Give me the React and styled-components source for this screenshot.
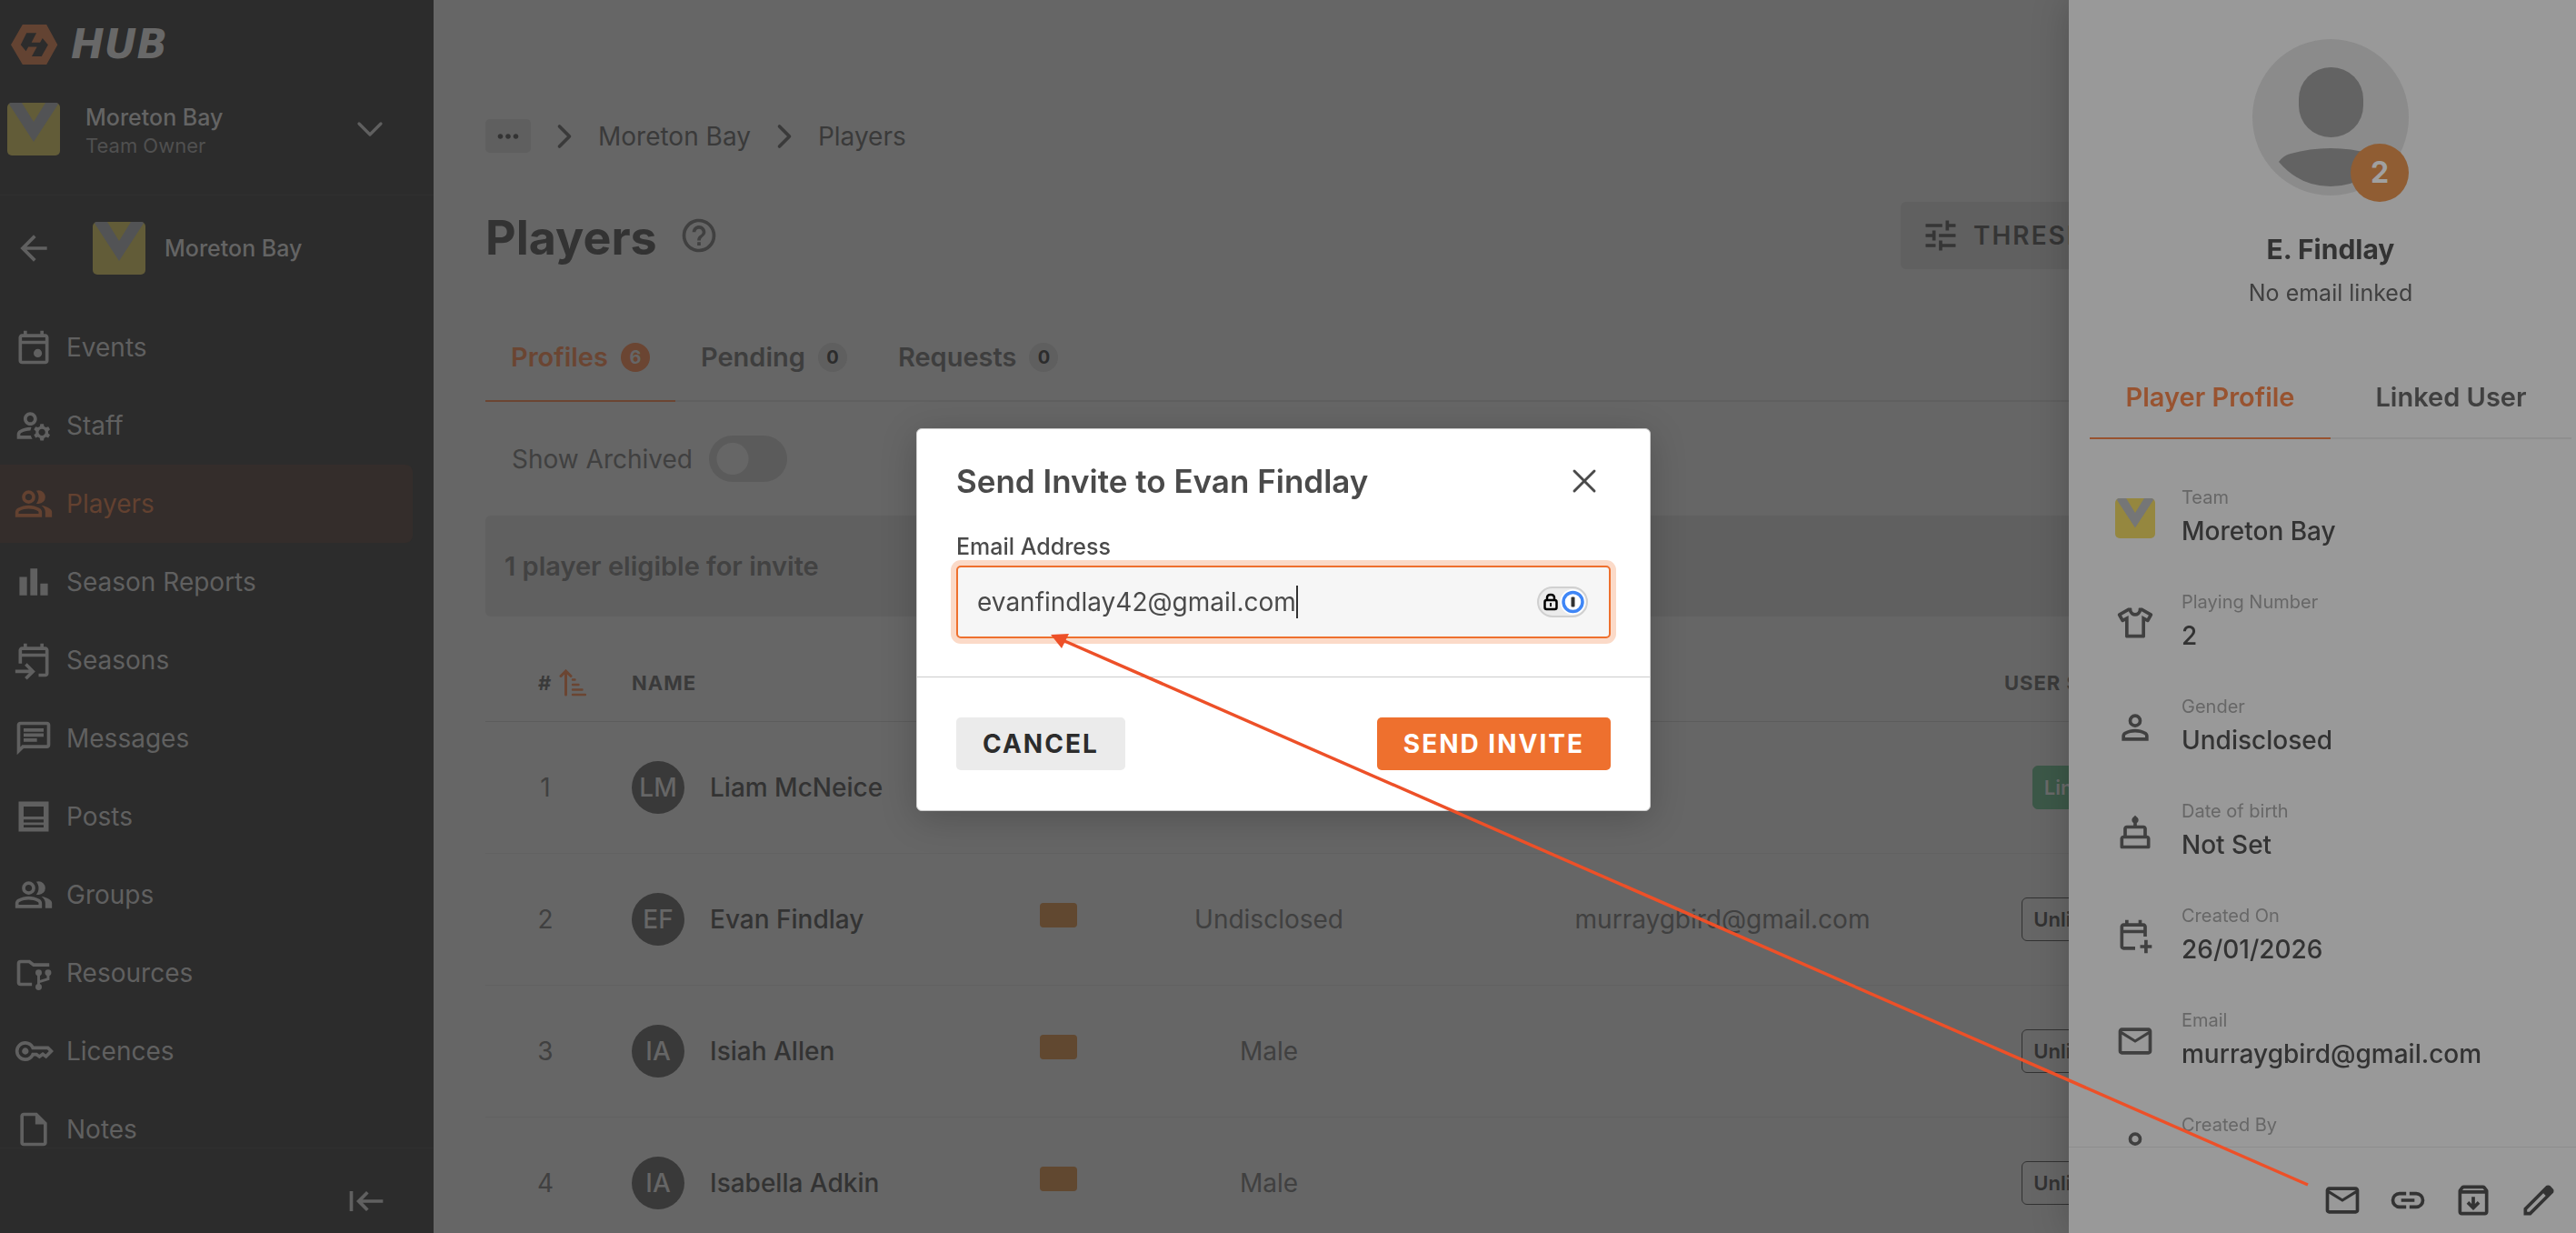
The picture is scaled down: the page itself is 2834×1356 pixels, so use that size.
import { useState } from 'react';
import styled, { createGlobalStyle } from 'styled-components';
import { MdHelpOutline, MdOutlineManageAccounts, MdMoreHoriz } from 'react-icons/md';
import { ChevronDown, ChevronRight, X } from 'lucide-react';

// Paths are drawn on the 960 unit grid with a negative y axis
const paths = {
  event:
    'M580-240q-42 0-71-29t-29-71q0-42 29-71t71-29q42 0 71 29t29 71q0 42-29 71t-71 29ZM200-80q-33 0-56.5-23.5T120-160v-560q0-33 23.5-56.5T200-800h40v-80h80v80h320v-80h80v80h40q33 0 56.5 23.5T840-720v560q0 33-23.5 56.5T760-80H200Zm0-80h560v-400H200v400Zm0-480h560v-80H200v80Z',
  group:
    'M40-160v-112q0-34 17.5-62.5T104-378q62-31 126-46.5T360-440q66 0 130 15.5T616-378q29 15 46.5 43.5T680-272v112H40Zm720 0v-120q0-44-24.5-84.5T666-434q51 6 96 20.5t84 35.5q36 20 55 44.5t19 53.5v120H760ZM360-480q-66 0-113-47t-47-113q0-66 47-113t113-47q66 0 113 47t47 113q0 66-47 113t-113 47Zm400-160q0 66-47 113t-113 47q-11 0-28-2.5t-28-5.5q27-32 41.5-71t14.5-81q0-42-14.5-81T544-792q14-5 28-6.5t28-1.5q66 0 113 47t47 113ZM120-240h480v-32q0-11-5.500-20T580-306q-54-27-109-40.500T360-360q-56 0-111 13.500T140-306q-9 5-14.500 14t-5.500 20v32Zm240-320q33 0 56.500-23.500T440-640q0-33-23.500-56.500T360-720q-33 0-56.500 23.500T280-640q0 33 23.500 56.500T360-560Z',
  chart: 'M640-160v-280h180v280H640Zm-240 0v-640h170v640H400Zm-260 0v-440h180v440H140Z',
  upcoming:
    'M600-80v-80h160v-400H200v160h-80v-320q0-33 23.5-56.5T200-800h40v-80h80v80h320v-80h80v80h40q33 0 56.5 23.5T840-720v560q0 33-23.5 56.5T760-80H600ZM320-10l-56-56 103-104H40v-80h327L264-354l56-56 200 200L320-10ZM200-640h560v-80H200v80Z',
  chat:
    'M240-400h320v-80H240v80Zm0-120h480v-80H240v80Zm0-120h480v-80H240v80ZM80-80v-720q0-33 23.5-56.5T160-880h640q33 0 56.5 23.5T880-800v480q0 33-23.5 56.5T800-240H240L80-80Zm126-240h594v-480H160v525l46-45Z',
  posts: 'M120-120v-720h720v720H120Zm120-360h480v-240H240v240Zm0 140h480v-70H240v70Zm0 120h480v-60H240v60Z',
  key:
    'M280-400q-33 0-56.5-23.5T200-480q0-33 23.5-56.5T280-560q33 0 56.5 23.5T360-480q0 33-23.5 56.5T280-400Zm0 160q-100 0-170-70T40-480q0-100 70-170t170-70q67 0 121.5 33t86.5 87h352l120 120-180 180-80-60-80 60-85-60h-47q-32 54-86.5 87T280-240Zm0-80q56 0 98.5-34t56.5-86h125l58 41 82-61 71 55 75-75-40-40H435q-14-52-56.5-86T280-640q-66 0-113 47t-47 113q0 66 47 113t113 47Z',
  note:
    'M240-80q-33 0-56.5-23.5T160-160v-640q0-33 23.5-56.5T240-880h320l240 240v480q0 33-23.5 56.5T720-80H240Zm280-520v-200H240v640h480v-440H520Z',
  back: 'm313-440 224 224-57 56-320-320 320-320 57 56-224 224h487v80H313Z',
  collapse: 'M160-240v-480H80v480h80Zm320 0 57-56-143-144h486v-80H393l144-144-57-56-240 240 240 240Z',
  tune:
    'M440-120v-240h80v80h320v80H520v80h-80Zm-320-80v-80h240v80H120Zm160-160v-80H120v-80h160v-80h80v240h-80Zm160-80v-80h400v80H440Zm160-160v-240h80v80h160v80H680v80h-80Zm-480-80v-80h400v80H120Z',
  shirt:
    'm240-522-40 22q-14 8-30 4t-24-18L66-654q-8-14-4-30t18-24l230-132h70q9 0 14.5 5.5T400-820v20q0 33 23.5 56.5T480-720q33 0 56.5-23.5T560-800v-20q0-9 5.5-14.5T580-840h70l230 132q14 8 18 24t-4 30l-80 140q-8 14-23.5 17.5T760-501l-40-20v361q0 17-11.5 28.5T680-120H280q-17 0-28.5-11.5T240-160v-362Zm80-134v456h320v-456l124 68 42-70-172-100q-15 51-56.5 84.5T480-640q-56 0-97.5-33.5T326-758L154-658l42 70 124-68Z',
  person:
    'M480-480q-66 0-113-47t-47-113q0-66 47-113t113-47q66 0 113 47t47 113q0 66-47 113t-113 47ZM160-160v-112q0-34 17.5-62.5T224-378q62-31 126-46.5T480-440q66 0 130 15.5T736-378q29 15 46.5 43.5T800-272v112H160Zm80-80h480v-32q0-11-5.5-20T700-306q-54-27-109-40.5T480-360q-56 0-111 13.5T260-306q-9 5-14.5 14t-5.5 20v32Zm240-320q33 0 56.5-23.5T560-640q0-33-23.5-56.5T480-720q-33 0-56.5 23.5T400-640q0 33 23.5 56.5T480-560Z',
  cake:
    'M160-80q-17 0-28.5-11.5T120-120v-200q0-33 23.5-56.5T200-400v-160q0-33 23.5-56.5T280-640h160v-58q-18-12-29-29t-11-41q0-15 6-29.5t18-26.5l56-56 56 56q12 12 18 26.5t6 29.5q0 24-11 41t-29 29v58h160q33 0 56.5 23.5T760-560v160q33 0 56.5 23.5T840-320v200q0 17-11.5 28.5T800-80H160Zm120-320h400v-160H280v160Zm-80 240h560v-160H200v160Z',
  calendarAdd:
    'M700-80v-120H600v-80h100v-120h80v120h100v80H780v120h-80ZM200-160q-33 0-56.5-23.5T120-240v-480q0-33 23.5-56.5T200-800h40v-80h80v80h240v-80h80v80h40q33 0 56.5 23.5T760-720v240h-80v-80H200v320h280v80H200Zm0-480h480v-80H200v80Z',
  mail:
    'M160-160q-33 0-56.5-23.5T80-240v-480q0-33 23.5-56.5T160-800h640q33 0 56.5 23.5T880-720v480q0 33-23.5 56.5T800-160H160Zm320-280L160-640v400h640v-400L480-440Zm0-80 320-200H160l320 200Z',
  link:
    'M440-280H280q-83 0-141.5-58.5T80-480q0-83 58.5-141.5T280-680h160v80H280q-50 0-85 35t-35 85q0 50 35 85t85 35h160v80ZM320-440v-80h320v80H320Zm200 160v-80h160q50 0 85-35t35-85q0-50-35-85t-85-35H520v-80h160q83 0 141.5 58.5T880-480q0 83-58.5 141.5T680-280H520Z',
  archive:
    'm480-240 160-160-56-56-64 64v-168h-80v168l-64-64-56 56 160 160ZM200-640v440h560v-440H200Zm0 520q-33 0-56.5-23.5T120-200v-499q0-14 4.5-27t13.5-24l50-61q11-14 27.5-21.5T250-840h460q18 0 34.5 7.5T772-811l50 61q9 11 13.5 24t4.5 27v499q0 33-23.5 56.5T760-120H200Zm16-600h528l-34-40H250l-34 40Z',
  edit:
    'M200-200h57l391-391-57-57-391 391v57Zm-80 80v-170l528-527q12-11 26.5-17t30.5-6q16 0 31 6t26 18l55 56q12 11 17.5 26t5.5 30q0 16-5.5 30.5T817-647L290-120H120Z'
};

const Icon = ({ name, size = 44 }) => (
  <svg width={size} height={size} viewBox="0 -960 960 960" fill="currentColor" aria-hidden="true">
    <path d={paths[name]} />
  </svg>
);

const FolderTreeIcon = () => (
  <svg width="44" height="44" viewBox="0 0 24 24" fill="none" stroke="currentColor" strokeWidth="2" aria-hidden="true">
    <path d="M11 18.8H4.2Q3 18.8 3 17.6V6.4Q3 5.2 4.2 5.2H9.4L12 7.2H21.4" />
    <path d="M15 12V20.5M20.7 12V15.6L15 17.4" strokeWidth="1.6" />
    <g fill="currentColor" stroke="none">
      <circle cx="15" cy="11.8" r="1.9" />
      <circle cx="20.7" cy="11.8" r="1.9" />
      <circle cx="15" cy="20.4" r="1.9" />
    </g>
  </svg>
);

const SortIcon = () => (
  <svg width="30" height="30" viewBox="0 0 30 30" fill="none" stroke="currentColor" strokeWidth="2.4" strokeLinecap="round" aria-hidden="true">
    <path d="M7.5 28V2.5M2 7.5L7.5 2L13 7.5" strokeWidth="3" />
    <path d="M15 11.5H17.5M15 17H21.5M15 22.5H25.5M15 28H29" />
  </svg>
);

const TeamBadge = ({ size, bright }) => (
  <BadgeSvg width={size} height={size} viewBox="0 0 58 58" aria-hidden="true">
    <rect width="58" height="58" fill={bright ? '#95873f' : '#625c38'} />
    <path d="M1 0H16L29 21L42 0H57L29 43Z" fill={bright ? '#757677' : '#525355'} />
  </BadgeSvg>
);

const navItems = [
  { label: 'Events', icon: <Icon name="event" /> },
  { label: 'Staff', icon: <MdOutlineManageAccounts size={44} /> },
  { label: 'Players', icon: <Icon name="group" />, active: true },
  { label: 'Season Reports', icon: <Icon name="chart" /> },
  { label: 'Seasons', icon: <Icon name="upcoming" /> },
  { label: 'Messages', icon: <Icon name="chat" /> },
  { label: 'Posts', icon: <Icon name="posts" /> },
  { label: 'Groups', icon: <Icon name="group" /> },
  { label: 'Resources', icon: <FolderTreeIcon /> },
  { label: 'Licences', icon: <Icon name="key" /> },
  { label: 'Notes', icon: <Icon name="note" /> }
];

const tabs = [
  { label: 'Profiles', count: 6, active: true },
  { label: 'Pending', count: 0 },
  { label: 'Requests', count: 0 }
];

const players = [
  { number: 1, initials: 'LM', name: 'Liam McNeice', linked: true },
  { number: 2, initials: 'EF', name: 'Evan Findlay', card: true, gender: 'Undisclosed', email: 'murraygbird@gmail.com' },
  { number: 3, initials: 'IA', name: 'Isiah Allen', card: true, gender: 'Male' },
  { number: 4, initials: 'IA', name: 'Isabella Adkin', card: true, gender: 'Male' }
];

const details = [
  { label: 'Team', value: 'Moreton Bay' },
  { label: 'Playing Number', value: '2', icon: 'shirt' },
  { label: 'Gender', value: 'Undisclosed', icon: 'person' },
  { label: 'Date of birth', value: 'Not Set', icon: 'cake' },
  { label: 'Created On', value: '26/01/2026', icon: 'calendarAdd' },
  { label: 'Email', value: 'murraygbird@gmail.com', icon: 'mail' },
  { label: 'Created By', value: '', icon: 'person' }
];

const Sidebar = () => (
  <Side>
    <Brand>
      <svg width="52" height="46" viewBox="35 31 154 135" aria-hidden="true">
        <path
          d="M35 99L73 33H151L187 99L151 164H73ZM67 99L84 120L92 106H120L103 137H135L156 99L138 78L130 92H102L118 61H86Z"
          fill="#634332"
          fillRule="evenodd"
        />
      </svg>
      <BrandName>HUB</BrandName>
    </Brand>
    <Account>
      <TeamBadge size={58} />
      <AccountText>
        <SideTitle>Moreton Bay</SideTitle>
        <SideRole>Team Owner</SideRole>
      </AccountText>
      <IconButton aria-label="Switch account">
        <ChevronDown size={48} strokeWidth={1.6} />
      </IconButton>
    </Account>
    <TeamRow>
      <IconButton aria-label="Back">
        <Icon name="back" />
      </IconButton>
      <TeamBadge size={58} />
      <SideTitle>Moreton Bay</SideTitle>
    </TeamRow>
    <Nav>
      {navItems.map(item => (
        <NavItem key={item.label} href="#" $active={item.active}>
          {item.icon}
          {item.label}
        </NavItem>
      ))}
    </Nav>
    <SideFooter>
      <IconButton aria-label="Collapse menu">
        <Icon name="collapse" />
      </IconButton>
    </SideFooter>
  </Side>
);

const PlayersPage = () => (
  <Main>
    <Crumbs aria-label="Breadcrumb">
      <CrumbMore aria-label="More">
        <MdMoreHoriz size={34} />
      </CrumbMore>
      <ChevronRight size={44} strokeWidth={2} />
      <a href="#">Moreton Bay</a>
      <ChevronRight size={44} strokeWidth={2} />
      <span>Players</span>
    </Crumbs>
    <TitleRow>
      <PageTitle>Players</PageTitle>
      <MdHelpOutline size={44} />
      <Actions>
        <ToolButton>
          <Icon name="tune" />
          THRESHOLDS
        </ToolButton>
      </Actions>
    </TitleRow>
    <Tabs>
      {tabs.map(tab => (
        <Tab key={tab.label} $active={tab.active}>
          {tab.label}
          <Count $active={tab.active}>{tab.count}</Count>
        </Tab>
      ))}
    </Tabs>
    <ArchivedRow>
      Show Archived
      <Toggle type="checkbox" role="switch" />
    </ArchivedRow>
    <Banner>1 player eligible for invite</Banner>
    <Table>
      <colgroup>
        <col width="132" />
        <col width="456" />
        <col width="85" />
        <col width="378" />
        <col width="620" />
        <col width="158" />
        <col />
      </colgroup>
      <thead>
        <tr>
          <th>
            <SortHead>
              # <SortIcon />
            </SortHead>
          </th>
          <LeftHead $inset>NAME</LeftHead>
          <th></th>
          <th></th>
          <th></th>
          <LeftHead>USER STATUS</LeftHead>
          <th></th>
        </tr>
      </thead>
      <tbody>
        {players.map(player => (
          <tr key={player.number}>
            <td>{player.number}</td>
            <td>
              <Person>
                <Initials>{player.initials}</Initials>
                {player.name}
              </Person>
            </td>
            <td>{player.card && <Swatch />}</td>
            <td>{player.gender}</td>
            <td>{player.email}</td>
            <td>
              <Status $linked={player.linked}>{player.linked ? 'Linked' : 'Unlinked'}</Status>
            </td>
            <td></td>
          </tr>
        ))}
      </tbody>
    </Table>
  </Main>
);

const PlayerDrawer = () => (
  <Drawer>
    <DrawerHead>
      <Avatar>
        <svg width="172" height="172" viewBox="0 0 172 172" aria-hidden="true">
          <circle cx="86" cy="86" r="86" fill="#8b8b8b" />
          <rect x="51" y="31" width="71" height="77" rx="35" fill="#636363" />
          <path d="M29 135Q34 128 42 126Q63 120 86 120T130 126Q138 128 143 135Q120 162 86 162T29 135Z" fill="#636363" />
        </svg>
        <AvatarNumber>2</AvatarNumber>
      </Avatar>
      <DrawerName>E. Findlay</DrawerName>
      <DrawerNote>No email linked</DrawerNote>
    </DrawerHead>
    <DrawerTabs>
      <DrawerTab $active>Player Profile</DrawerTab>
      <DrawerTab>Linked User</DrawerTab>
    </DrawerTabs>
    <Details>
      {details.map(item => (
        <Detail key={item.label}>
          {item.icon ? <Icon name={item.icon} /> : <TeamBadge size={44} bright />}
          <div>
            <DetailLabel>{item.label}</DetailLabel>
            <DetailValue>{item.value}</DetailValue>
          </div>
        </Detail>
      ))}
    </Details>
    <DrawerFooter>
      <IconButton aria-label="Send invite">
        <Icon name="mail" />
      </IconButton>
      <IconButton aria-label="Link user">
        <Icon name="link" />
      </IconButton>
      <IconButton aria-label="Archive">
        <Icon name="archive" />
      </IconButton>
      <IconButton aria-label="Edit">
        <Icon name="edit" />
      </IconButton>
    </DrawerFooter>
  </Drawer>
);

const InviteModal = () => {
  const [email, setEmail] = useState('evanfindlay42@gmail.com');

  const handleSubmit = e => {
    e.preventDefault();
  };

  return (
    <Backdrop>
      <Modal role="dialog" aria-labelledby="invite-title" onSubmit={handleSubmit}>
        <ModalBody>
          <ModalHead>
            <h2 id="invite-title">Send Invite to Evan Findlay</h2>
            <IconButton type="button" aria-label="Close">
              <X size={44} strokeWidth={1.6} />
            </IconButton>
          </ModalHead>
          <label htmlFor="invite-email">Email Address</label>
          <Field>
            <FieldText>
              <EmailInput id="invite-email" type="text" value={email} onChange={e => setEmail(e.target.value)} />
              <Caret />
            </FieldText>
            <svg width="56" height="34" viewBox="0 0 56 34" aria-hidden="true">
              <rect x="1" y="1" width="54" height="32" rx="16" fill="#ebebeb" stroke="#d0d0d0" strokeWidth="2" />
              <rect x="8.5" y="15" width="13" height="10" rx="2" fill="none" stroke="#000" strokeWidth="2.5" />
              <path d="M11 15V12.5Q11 9 15 9T19 12.5V15" fill="none" stroke="#000" strokeWidth="2.5" />
              <path d="M15 18V22" stroke="#000" strokeWidth="2" />
              <circle cx="39.5" cy="17" r="14" fill="#fff" />
              <circle cx="39.5" cy="17" r="10.5" fill="#fff" stroke="#3f86f6" strokeWidth="3.5" />
              <rect x="37.5" y="11.5" width="4" height="11" rx="1" fill="#333" />
            </svg>
          </Field>
        </ModalBody>
        <ModalFooter>
          <ModalButton type="button">CANCEL</ModalButton>
          <ModalButton type="submit" $primary>
            SEND INVITE
          </ModalButton>
        </ModalFooter>
      </Modal>
    </Backdrop>
  );
};

const App = () => (
  <Page>
    <GlobalStyle />
    <Sidebar />
    <PlayersPage />
    <PlayerDrawer />
    <InviteModal />
    <Pointer viewBox="0 0 2834 1356" aria-hidden="true">
      <path d="M2539 1303L1169 704" stroke="#ed5028" strokeWidth="3.5" />
      <path d="M1156 698L1176 697L1168 713Z" fill="#ed5028" />
    </Pointer>
  </Page>
);

export default App;

const GlobalStyle = createGlobalStyle`
  * {
    box-sizing: border-box;
  }
  body {
    margin: 0;
    overflow: hidden;
    background: #666666;
    font-family: Inter, 'Liberation Sans', sans-serif;
    font-size: 28px;
    line-height: 34px;
  }
  button, input {
    font: inherit;
  }
  a {
    color: inherit;
    text-decoration: none;
  }
  svg {
    display: block;
    flex: none;
  }
  h1, h2, p {
    margin: 0;
  }
`;

const Page = styled.div`
  display: flex;
  height: 100vh;
`;

const IconButton = styled.button`
  padding: 0;
  border: 0;
  background: none;
  color: inherit;
`;

const BadgeSvg = styled.svg`
  border-radius: 5px;
`;

const Side = styled.aside`
  width: 477px;
  flex: none;
  display: flex;
  flex-direction: column;
  background: #2c2c2c;
  color: #606060;
`;

const Brand = styled.div`
  display: flex;
  align-items: center;
  gap: 14px;
  height: 98px;
  padding: 0 12px;
`;

const BrandName = styled.span`
  font-family: 'DejaVu Sans', sans-serif;
  font-size: 44px;
  font-weight: 700;
  font-style: italic;
  line-height: 48px;
  color: #686868;
`;

const Account = styled.div`
  display: flex;
  align-items: center;
  height: 117px;
  padding: 0 46px 28px 8px;
  border-bottom: 1px solid #303030;
`;

const AccountText = styled.div`
  flex: 1;
  padding: 3px 0 0 28px;
`;

const SideTitle = styled.p`
  font-size: 25px;
  font-weight: 500;
  line-height: 32px;
  color: #646464;
`;

const SideRole = styled.p`
  font-size: 22px;
  line-height: 30px;
  color: #505050;
`;

const TeamRow = styled.div`
  display: flex;
  align-items: center;
  height: 124px;
  padding: 0 15px 8px;

  button + svg {
    margin: 0 21px 0 43px;
  }
`;

const Nav = styled.nav`
  flex: 1;
  min-height: 0;
  overflow: hidden;
`;

const NavItem = styled.a`
  display: flex;
  align-items: center;
  gap: 14px;
  height: 86px;
  margin-right: 23px;
  padding-left: 15px;
  border-radius: 0 8px 8px 0;
  background: ${({ $active }) => ($active ? '#342d2b' : 'none')};
  color: ${({ $active }) => ($active ? '#634130' : 'inherit')};
`;

const SideFooter = styled.div`
  display: flex;
  align-items: flex-start;
  justify-content: flex-end;
  height: 94px;
  padding: 36px 52px 0 0;
  border-top: 1px solid #303030;
`;

const Main = styled.main`
  flex: 1;
  min-width: 0;
  padding: 131px 57px 0;
  overflow: hidden;
  color: #404040;
`;

const Crumbs = styled.nav`
  display: flex;
  align-items: center;
  gap: 15px;
  height: 37px;
  color: #3a3a3a;
`;

const CrumbMore = styled.button`
  display: flex;
  align-items: center;
  justify-content: center;
  width: 50px;
  height: 37px;
  padding: 0;
  border: 0;
  border-radius: 5px;
  background: #5f5f5f;
  color: #333333;
`;

const TitleRow = styled.div`
  display: flex;
  align-items: center;
  gap: 24px;
  height: 74px;
  margin-top: 54px;
`;

const PageTitle = styled.h1`
  padding-top: 6px;
  font-size: 52px;
  font-weight: 700;
  line-height: 68px;
  color: #333333;
`;

const Actions = styled.div`
  display: flex;
  width: 686px;
  margin-left: auto;
`;

const ToolButton = styled.button`
  display: flex;
  align-items: center;
  gap: 14px;
  height: 74px;
  padding: 0 22px;
  border: 0;
  border-radius: 6px;
  background: #606060;
  color: #353535;
  font-weight: 600;
  letter-spacing: 2px;
`;

const Tabs = styled.div`
  display: flex;
  height: 94px;
  margin-top: 52px;
  border-bottom: 2px solid #606060;
`;

const Tab = styled.button`
  display: flex;
  align-items: center;
  gap: 14px;
  height: 94px;
  padding: 0 28px 2px;
  border: 0;
  border-bottom: 2px solid ${({ $active }) => ($active ? '#6b4532' : 'transparent')};
  background: none;
  color: ${({ $active }) => ($active ? '#6b4532' : '#3e3e3e')};
  font-size: 29px;
  font-weight: 600;
`;

const Count = styled.span`
  width: 32px;
  height: 32px;
  border-radius: 50%;
  background: ${({ $active }) => ($active ? '#6b4532' : '#5f5f5f')};
  color: ${({ $active }) => ($active ? '#666666' : '#2c2c2c')};
  font-size: 20px;
  font-weight: 700;
  line-height: 32px;
  text-align: center;
`;

const ArchivedRow = styled.label`
  display: flex;
  align-items: center;
  gap: 18px;
  height: 125px;
  padding-left: 29px;
`;

const Toggle = styled.input`
  appearance: none;
  width: 86px;
  height: 51px;
  margin: 0;
  border-radius: 26px;
  background: radial-gradient(circle at 26px 50%, #666666 17px, #5b5b5b 18px);
`;

const Banner = styled.div`
  height: 111px;
  padding: 0 21px;
  border-radius: 6px;
  background: #606060;
  color: #424242;
  font-size: 29px;
  font-weight: 600;
  line-height: 111px;
`;

const Table = styled.table`
  width: 100%;
  table-layout: fixed;
  border-collapse: collapse;

  th {
    height: 115px;
    padding: 32px 0 0;
    border-bottom: 1px solid #5c5c5c;
    color: #3a3a3a;
    font-size: 22px;
    font-weight: 700;
    letter-spacing: 1px;
    white-space: nowrap;
  }

  td {
    height: 145px;
    padding: 0;
    border-bottom: 1px solid #616161;
    text-align: center;
  }
`;

const SortHead = styled.div`
  display: flex;
  align-items: center;
  gap: 8px;
  padding-left: 58px;

  svg {
    color: #6b4532;
  }
`;

const LeftHead = styled.th`
  && {
    padding-left: ${({ $inset }) => ($inset ? '29px' : '0')};
  }
  text-align: left;
`;

const Person = styled.div`
  display: flex;
  align-items: center;
  gap: 28px;
  padding-left: 29px;
  color: #333333;
  font-weight: 500;
`;

const Initials = styled.span`
  width: 58px;
  height: 58px;
  border-radius: 50%;
  background: #393939;
  color: #666666;
  line-height: 58px;
  text-align: center;
`;

const Swatch = styled.div`
  width: 41px;
  height: 27px;
  margin: 0 auto 8px;
  border-radius: 4px;
  background: #614830;
`;

const Status = styled.span`
  display: inline-block;
  padding: 6px 12px;
  border: 1px solid ${({ $linked }) => ($linked ? '#3c5848' : '#323232')};
  border-radius: 6px;
  background: ${({ $linked }) => ($linked ? '#3c5848' : 'none')};
  color: ${({ $linked }) => ($linked ? '#6a6a6a' : '#323232')};
  font-size: 22px;
  font-weight: 600;
`;

const Drawer = styled.aside`
  position: fixed;
  top: 0;
  right: 0;
  bottom: 0;
  width: 558px;
  display: flex;
  flex-direction: column;
  background: #999999;
  color: #404040;
  box-shadow: 0 0 40px rgba(0, 0, 0, 0.2);
`;

const DrawerHead = styled.div`
  display: flex;
  flex-direction: column;
  align-items: center;
  height: 392px;
  padding: 43px 0 0 18px;
`;

const Avatar = styled.div`
  position: relative;
`;

const AvatarNumber = styled.span`
  position: absolute;
  right: 0;
  bottom: -7px;
  width: 64px;
  height: 64px;
  border-radius: 50%;
  background: #905d33;
  color: #a0a0a0;
  font-size: 32px;
  font-weight: 700;
  line-height: 64px;
  text-align: center;
`;

const DrawerName = styled.p`
  margin-top: 40px;
  color: #333333;
  font-size: 30px;
  font-weight: 700;
  line-height: 38px;
`;

const DrawerNote = styled.p`
  margin-top: 12px;
  font-size: 25px;
`;

const DrawerTabs = styled.div`
  display: grid;
  grid-template-columns: 1fr 1fr;
  height: 91px;
  margin: 0 5px 0 23px;
  border-bottom: 2px solid #8f8f8f;
`;

const DrawerTab = styled.button`
  height: 91px;
  padding: 0;
  border: 0;
  border-bottom: 2px solid ${({ $active }) => ($active ? '#985330' : 'transparent')};
  background: none;
  color: ${({ $active }) => ($active ? '#985330' : '#404040')};
  font-size: 29px;
  font-weight: 600;
`;

const Details = styled.div`
  flex: 1;
  min-height: 0;
  padding: 29px 51px 0;
  overflow: hidden;
`;

const Detail = styled.div`
  display: flex;
  align-items: center;
  gap: 29px;
  height: 115px;
`;

const DetailLabel = styled.p`
  color: #676767;
  font-size: 20px;
  line-height: 32px;
`;

const DetailValue = styled.p`
  height: 46px;
  color: #333333;
  font-weight: 500;
  line-height: 42px;
`;

const DrawerFooter = styled.div`
  display: flex;
  align-items: center;
  justify-content: flex-end;
  gap: 28px;
  height: 95px;
  padding: 22px 19px 0 0;
  border-top: 1px solid #8d8d8d;
  color: #333333;
`;

const Backdrop = styled.div`
  position: fixed;
  inset: 0;
  display: flex;
  align-items: center;
  justify-content: center;
  padding: 6px 10px 0 0;
`;

const Modal = styled.form`
  width: 808px;
  border: 1px solid #cccccc;
  border-radius: 6px;
  background: #ffffff;
  color: #4a4a4a;
  box-shadow: 0 8px 40px rgba(0, 0, 0, 0.2);
`;

const ModalBody = styled.div`
  padding: 34px 43px 42px;

  label {
    display: block;
    margin-bottom: 3px;
    font-size: 25px;
    font-weight: 500;
    line-height: 36px;
  }
`;

const ModalHead = styled.div`
  display: flex;
  align-items: center;
  justify-content: space-between;
  height: 46px;
  margin-bottom: 31px;
  padding-right: 7px;

  h2 {
    font-size: 35px;
    font-weight: 600;
    line-height: 46px;
  }
`;

const Field = styled.div`
  display: flex;
  align-items: center;
  justify-content: space-between;
  height: 80px;
  padding: 0 23px 0 21px;
  border: 2px solid #ee702e;
  border-radius: 5px;
  background: #f6f6f6;
  box-shadow: 0 0 0 6px #fbdac8;
`;

const FieldText = styled.div`
  display: flex;
  align-items: center;
`;

const EmailInput = styled.input`
  field-sizing: content;
  padding: 0;
  border: 0;
  outline: 0;
  background: none;
  color: #4a4a4a;
`;

const Caret = styled.span`
  width: 2px;
  height: 36px;
  background: #333333;
`;

const ModalFooter = styled.div`
  display: flex;
  align-items: center;
  justify-content: space-between;
  height: 147px;
  padding: 0 43px;
  border-top: 1px solid #cccccc;
`;

const ModalButton = styled.button`
  height: 58px;
  padding: 0 29px;
  border: 0;
  border-radius: 5px;
  background: ${({ $primary }) => ($primary ? '#ee702e' : '#ebebeb')};
  color: ${({ $primary }) => ($primary ? '#ffffff' : '#2c2c2c')};
  font-weight: 700;
  letter-spacing: 2px;
`;

const Pointer = styled.svg`
  position: fixed;
  inset: 0;
  width: 100%;
  height: 100%;
  pointer-events: none;
`;
